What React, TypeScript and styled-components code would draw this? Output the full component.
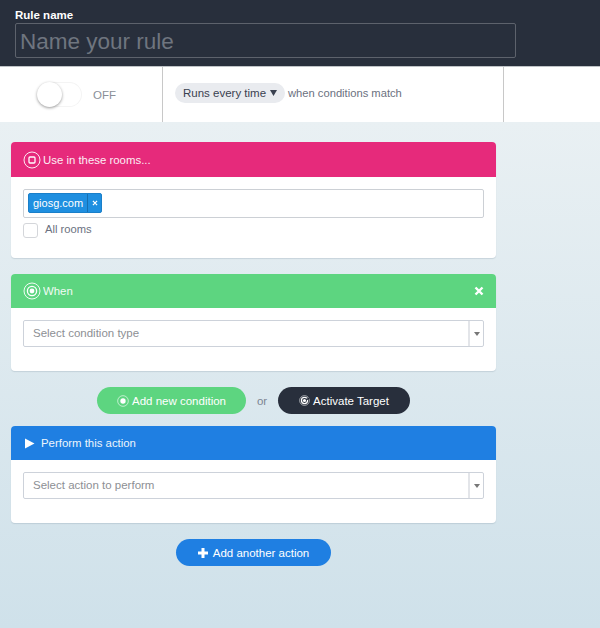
import React from "react";
import styled, { createGlobalStyle } from "styled-components";

const Global = createGlobalStyle`
  html, body { margin: 0; padding: 0; height: 100%; }
  body { font-family: "Liberation Sans", Arial, sans-serif; overflow: hidden; }
  #root { height: 628px; }
`;

const Page = styled.div`
  width: 600px;
  height: 628px;
  background: linear-gradient(180deg, #e9f0f3 122px, #cfe1ea 100%);
  display: flex;
  flex-direction: column;
`;

const Header = styled.header`
  height: 66px;
  box-sizing: border-box;
  background: #282f3c;
  padding: 8px 0 0 15px;
`;

const NameLabel = styled.label`
  display: block;
  color: #fff;
  font-size: 11.5px;
  line-height: 15px;
  font-weight: 700;
`;

const NameInput = styled.div`
  width: 501px;
  height: 35px;
  box-sizing: border-box;
  border: 1px solid #5d626c;
  border-radius: 2px;
  padding-left: 4px;
  color: #6f757f;
  font-size: 22.5px;
  line-height: 35px;
`;

const StatusBar = styled.div`
  height: 56px;
  box-sizing: border-box;
  background: #fff;
  border-top: 1px solid #bfc3c7;
  display: flex;
`;

const ToggleCell = styled.div`
  width: 163px;
  box-sizing: border-box;
  border-right: 1px solid #c8c8c8;
  display: flex;
  align-items: center;
  padding: 0 0 0 37px;
  gap: 11px;
`;

const Toggle = styled.div`
  position: relative;
  width: 45px;
  height: 25px;
  border-radius: 13px;
  box-shadow: inset 0 0 0 1px #f4f4f4;
`;

const Knob = styled.span`
  position: absolute;
  left: 0;
  top: 0;
  width: 25px;
  height: 25px;
  border-radius: 50%;
  background: #fff;
  box-shadow: 0 1px 3px rgba(0, 0, 0, 0.4);
`;

const ToggleText = styled.span`
  color: #8a8f99;
  font-size: 11.5px;
`;

const RunCell = styled.div`
  width: 341px;
  box-sizing: border-box;
  border-right: 1px solid #c8c8c8;
  display: flex;
  align-items: flex-start;
  padding: 16px 0 0 12px;
  gap: 3px;
  color: #6b7180;
  font-size: 11.2px;
  line-height: 20px;
`;

const RunPill = styled.span`
  background: #e9ebef;
  color: #3a4150;
  border-radius: 10px;
  width: 110px;
  box-sizing: border-box;
  height: 20px;
  padding-left: 8px;
  display: inline-flex;
  align-items: center;
  gap: 4px;
  font-size: 11.5px;
  white-space: nowrap;
`;

const Main = styled.main`
  width: 485px;
  margin-left: 11px;
  padding-top: 20px;
  display: flex;
  flex-direction: column;
`;

const Card = styled.section<{ $gap?: number }>`
  background: #fff;
  border-radius: 4px;
  box-shadow: 0 1px 1px rgba(120, 140, 155, 0.25);
  margin-bottom: ${(p) => p.$gap ?? 0}px;
  overflow: hidden;
`;

const CardHeader = styled.div<{ $bg: string; $h: number }>`
  height: ${(p) => p.$h}px;
  background: ${(p) => p.$bg};
  color: #fff;
  display: flex;
  align-items: center;
  padding: 0 12px;
  gap: 2px;
  font-size: 11.4px;
`;

const HeaderTitle = styled.span`
  flex: 1;
  opacity: 0.92;
`;

const CardBody = styled.div<{ $h: number }>`
  height: ${(p) => p.$h}px;
  box-sizing: border-box;
  padding: 12px 12px 0;
`;

const TagInput = styled.div`
  height: 29px;
  box-sizing: border-box;
  border: 1px solid #ccd0d5;
  border-radius: 2px;
  padding: 3px 4px;
`;

const Tag = styled.span`
  display: inline-flex;
  height: 20px;
  background: #1f8fe0;
  border: 1px solid #1a7fc9;
  box-sizing: border-box;
  border-radius: 2px;
  color: #fff;
  font-size: 11px;
  line-height: 18px;
`;

const TagName = styled.span`
  padding: 0 4px 0 4px;
  border-right: 1px solid #176fb0;
`;

const TagClose = styled.span`
  width: 13px;
  display: flex;
  align-items: center;
  justify-content: center;
`;

const CheckRow = styled.label`
  display: flex;
  align-items: flex-start;
  gap: 7px;
  margin-top: 5px;
  color: #6b7180;
  font-size: 11.2px;
  line-height: 13px;
`;

const CheckBox = styled.span`
  width: 13px;
  height: 13px;
  border: 1px solid #d4d6da;
  border-radius: 3px;
`;

const Select = styled.div`
  height: 27px;
  box-sizing: border-box;
  border: 1px solid #cdd2da;
  border-radius: 2px;
  display: flex;
  color: #8d8f94;
  font-size: 11.5px;
  line-height: 25px;
`;

const SelectText = styled.span`
  flex: 1;
  padding-left: 9px;
`;

const SelectArrow = styled.span`
  width: 13px;
  border-left: 2px solid #e3e5e9;
  display: flex;
  align-items: center;
  justify-content: center;
`;

const ButtonRow = styled.div`
  height: 27px;
  margin: 16px 0 12px;
  padding-left: 86px;
  display: flex;
  align-items: center;
`;

const CenterRow = styled.div`
  margin-top: 16px;
  padding-left: 165px;
`;

const Pill = styled.button<{ $bg: string; $w: number }>`
  width: ${(p) => p.$w}px;
  height: 27px;
  border: none;
  border-radius: 14px;
  padding: 0;
  background: ${(p) => p.$bg};
  color: #fff;
  font: 11.5px "Liberation Sans", Arial, sans-serif;
  display: inline-flex;
  align-items: center;
  justify-content: center;
  gap: 3px;
`;

const Or = styled.span`
  width: 32px;
  text-align: center;
  color: #7b8592;
  font-size: 11.5px;
`;

const RingIcon = ({ size = 18, kind }: { size?: number; kind: "square" | "target" | "dot" | "activate" }) => (
  <svg width={size} height={size} viewBox="0 0 18 18" fill="none" stroke="#fff">
    <circle cx="9" cy="9" r="8" strokeWidth="1" opacity="0.9" />
    {kind === "square" && <rect x="6" y="6" width="6" height="6" rx="1" strokeWidth="1.3" />}
    {kind === "target" && (
      <>
        <circle cx="9" cy="9" r="4.6" strokeWidth="1.3" />
        <circle cx="9" cy="9" r="2.4" fill="#fff" stroke="none" />
      </>
    )}
    {kind === "dot" && <circle cx="9" cy="9" r="4" fill="#fff" stroke="none" />}
    {kind === "activate" && (
      <>
        <circle cx="9" cy="9" r="5" strokeWidth="2" />
        <path d="M9 9 L17 5" strokeWidth="2.4" stroke="#282f3c" />
        <circle cx="9" cy="9" r="2.6" fill="#fff" stroke="none" />
      </>
    )}
  </svg>
);

const CloseIcon = ({ size, weight }: { size: number; weight: number }) => (
  <svg width={size} height={size} viewBox="0 0 10 10" stroke="#fff" strokeWidth={weight}>
    <path d="M1.5 1.5 L8.5 8.5 M8.5 1.5 L1.5 8.5" />
  </svg>
);

const ArrowIcon = ({ w = 6, h = 4, color = "#777" }: { w?: number; h?: number; color?: string }) => (
  <svg width={w} height={h} viewBox="0 0 6 4" preserveAspectRatio="none">
    <path d="M0 0 H6 L3 4 Z" fill={color} />
  </svg>
);

const PlayIcon = () => (
  <svg width="11" height="11" viewBox="0 0 11 11" style={{ margin: "0 4px 0 1px" }}>
    <path d="M1 0.5 L10.5 5.5 L1 10.5 Z" fill="#fff" />
  </svg>
);

const PlusIcon = () => (
  <svg width="10" height="10" viewBox="0 0 10 10" style={{ marginRight: 2 }}>
    <path d="M3.5 0 H6.5 V3.5 H10 V6.5 H6.5 V10 H3.5 V6.5 H0 V3.5 H3.5 Z" fill="#fff" />
  </svg>
);

export default function App() {
  return (
    <Page>
      <Global />
      <Header>
        <NameLabel>Rule name</NameLabel>
        <NameInput>Name your rule</NameInput>
      </Header>
      <StatusBar>
        <ToggleCell>
          <Toggle>
            <Knob />
          </Toggle>
          <ToggleText>OFF</ToggleText>
        </ToggleCell>
        <RunCell>
          <RunPill>
            Runs every time
            <ArrowIcon w={7} h={6} color="#3a4150" />
          </RunPill>
          <span>when conditions match</span>
        </RunCell>
      </StatusBar>
      <Main>
        <Card $gap={16}>
          <CardHeader $bg="#e62a7b" $h={35}>
            <RingIcon kind="square" />
            <HeaderTitle>Use in these rooms...</HeaderTitle>
          </CardHeader>
          <CardBody $h={81}>
            <TagInput>
              <Tag>
                <TagName>giosg.com</TagName>
                <TagClose>
                  <CloseIcon size={6} weight={2} />
                </TagClose>
              </Tag>
            </TagInput>
            <CheckRow>
              <CheckBox />
              All rooms
            </CheckRow>
          </CardBody>
        </Card>
        <Card>
          <CardHeader $bg="#5dd580" $h={34}>
            <RingIcon kind="target" />
            <HeaderTitle>When</HeaderTitle>
            <CloseIcon size={10} weight={2.4} />
          </CardHeader>
          <CardBody $h={63}>
            <Select>
              <SelectText>Select condition type</SelectText>
              <SelectArrow>
                <ArrowIcon />
              </SelectArrow>
            </Select>
          </CardBody>
        </Card>
        <ButtonRow>
          <Pill $bg="#5dd580" $w={149}>
            <RingIcon size={12} kind="dot" />
            Add new condition
          </Pill>
          <Or>or</Or>
          <Pill $bg="#282f3c" $w={132}>
            <RingIcon size={11} kind="activate" />
            Activate Target
          </Pill>
        </ButtonRow>
        <Card>
          <CardHeader $bg="#1f7fe2" $h={34}>
            <PlayIcon />
            <HeaderTitle>Perform this action</HeaderTitle>
          </CardHeader>
          <CardBody $h={63}>
            <Select>
              <SelectText>Select action to perform</SelectText>
              <SelectArrow>
                <ArrowIcon />
              </SelectArrow>
            </Select>
          </CardBody>
        </Card>
        <CenterRow>
          <Pill $bg="#1f7fe2" $w={155}>
            <PlusIcon />
            Add another action
          </Pill>
        </CenterRow>
      </Main>
    </Page>
  );
}
